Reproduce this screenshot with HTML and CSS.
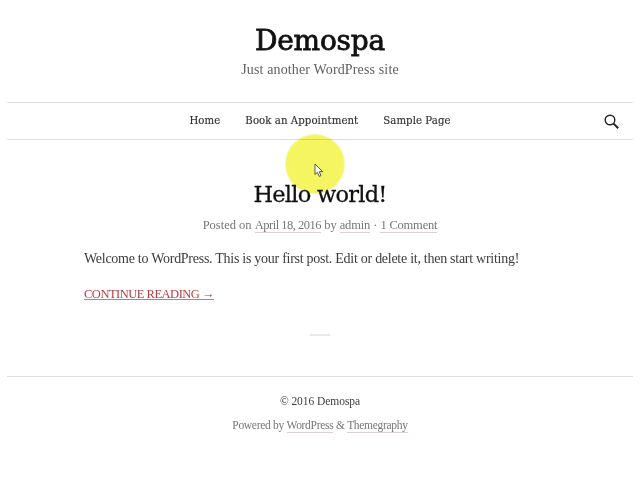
FILE: index.html
```
<!DOCTYPE html>
<html lang="en">
<head>
<meta charset="utf-8">
<title>Demospa</title>
<link rel="stylesheet" href="styles.css">
</head>
<body>
<header class="site-header">
  <h1 class="site-title">Demospa</h1>
  <p class="tagline">Just another WordPress site</p>
</header>
<nav class="main-nav">
  <a class="nav-home">Home</a>
  <a class="nav-book">Book an Appointment</a>
  <a class="nav-sample">Sample Page</a>
  <svg class="search" width="16" height="16" viewBox="0 0 16 16" fill="none" stroke="#222"><circle cx="6" cy="6" r="4.8" stroke-width="1.4"/><path d="M9.6 9.6 14.2 14.2" stroke-width="2"/></svg>
</nav>
<main class="post">
  <h2 class="post-title">Hello world!</h2>
  <p class="meta">Posted on <a class="date">April 18, 2016</a> by <a>admin</a> · <a>1 Comment</a></p>
  <p class="body-text">Welcome to WordPress. This is your first post. Edit or delete it, then start writing!</p>
  <p class="more"><a>CONTINUE READING →</a></p>
  <hr class="divider">
</main>
<footer class="site-footer">
  <p class="copyright">© 2016 Demospa</p>
  <p class="powered">Powered by <a>WordPress</a> &amp; <a>Themegraphy</a></p>
</footer>
<div class="highlight"></div>
<svg class="cursor" width="10" height="15" viewBox="0 0 10 15"><path d="M1 1V11.5L3.4 9.3 5.2 13.4 7 12.6 5.2 8.7H8.7Z" fill="#fff" stroke="#444" stroke-width=".9"/></svg>
</body>
</html>
```
FILE: styles.css
```
* { box-sizing: border-box; }
body {
  margin: 0;
  width: 640px;
  height: 480px;
  padding: 0 7px;
  position: relative;
  overflow: hidden;
  background: #fff;
  color: #3c3c3c;
  font-family: "Liberation Serif", serif;
}
h1, h2, p { margin: 0; font-weight: 400; white-space: nowrap; }
.site-header { height: 102px; padding-top: 22px; text-align: center; }
.site-title {
  font: 400 28px/38px "DejaVu Serif", serif;
  color: #111;
  letter-spacing: -.2px;
  -webkit-text-stroke: .8px #111;
}
.tagline { margin-top: -2px; font-size: 14px; line-height: 24px; color: #606060; letter-spacing: .14px; }
.main-nav {
  height: 38px;
  display: flex;
  align-items: center;
  justify-content: center;
  gap: 25px;
  position: relative;
  border-top: 1px solid #dfdddd;
  border-bottom: 1px solid #dfdddd;
  padding-bottom: 1px;
  font: 11.3px "DejaVu Serif Condensed", "DejaVu Serif", serif;
  letter-spacing: .07px;
  color: #333;
  -webkit-text-stroke: .15px #333;
}
.search { position: absolute; right: 13px; top: 11px; }
.post { height: 236px; padding-top: 38px; text-align: center; }
.post-title {
  font: 400 22.5px/32px "DejaVu Serif", serif;
  color: #111;
  letter-spacing: -.75px;
  -webkit-text-stroke: .3px #111;
}
.meta { margin-top: 6px; font-size: 12.5px; line-height: 18px; color: #777; letter-spacing: 0; }
.meta a { letter-spacing: -.2px; }
.meta a, .powered a { display: inline-block; line-height: 14px; border-bottom: 1px solid #ddd0d4; }
.meta .date { letter-spacing: -.5px; }
.body-text { margin: 15px 77px 0; font-size: 14px; line-height: 20px; text-align: left; letter-spacing: -.27px; }
.more { margin: 15px 77px 0; font-size: 12.5px; line-height: 20px; text-align: left; color: #b83c40; letter-spacing: -.49px; }
.more a { display: inline-block; line-height: 12px; height: 12px; border-bottom: 1px solid #c77; }
.divider { width: 20px; height: 2px; margin: 30px auto 0; border: 0; background: #e9e9e9; }
.site-footer { border-top: 1px solid #dfdddd; padding-top: 14px; text-align: center; }
.copyright { font-size: 11.5px; line-height: 20px; letter-spacing: -.05px; }
.powered { margin-top: 4px; font-size: 11.5px; line-height: 20px; color: #777; letter-spacing: -.3px; }
.highlight {
  position: absolute;
  left: 286px;
  top: 135px;
  width: 58px;
  height: 58px;
  border-radius: 50%;
  background: #f4f560;
  box-shadow: 0 0 1px 1px #f7f7a8;
  mix-blend-mode: multiply;
}
.cursor { position: absolute; left: 314px; top: 163px; }
```
